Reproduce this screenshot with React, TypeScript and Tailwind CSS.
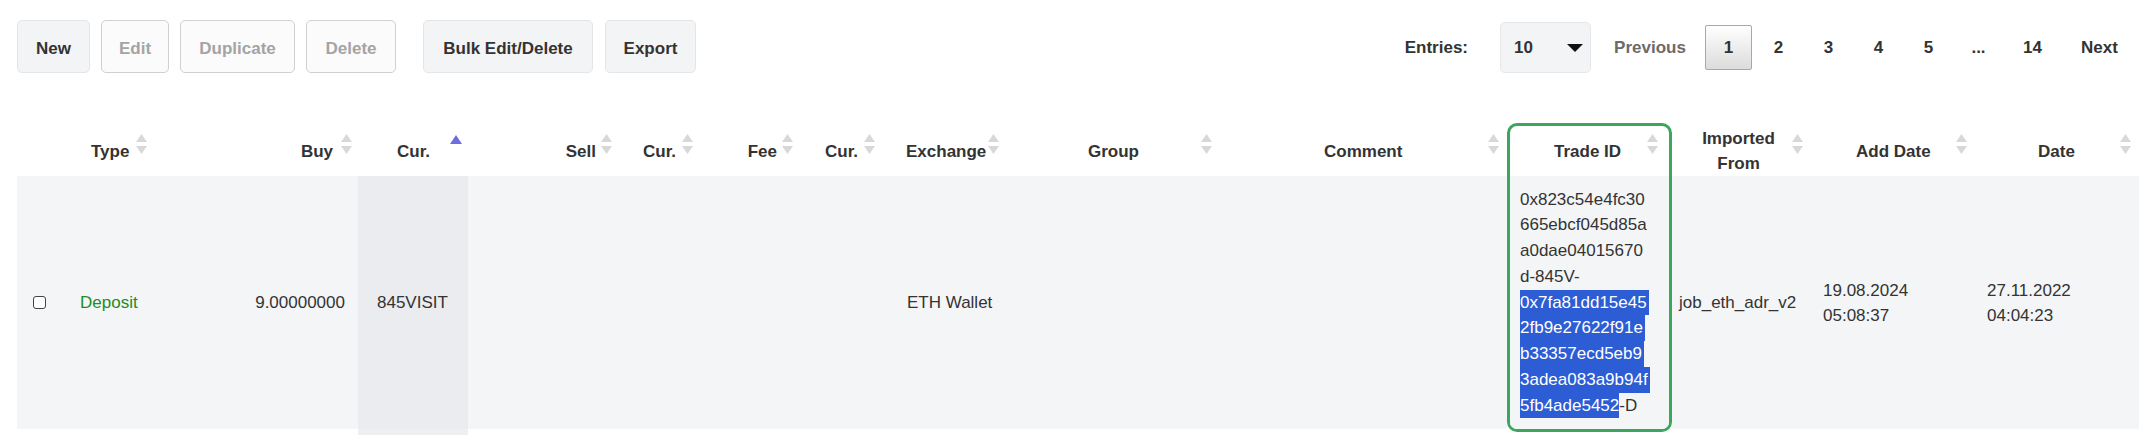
import React from "react";

function SortIcon() {
  return (
    <svg width="11" height="20" viewBox="0 0 11 20" className="text-[#d8d8d8]">
      <path d="M5.5 0 L11 8 L0 8 Z" fill="currentColor" />
      <path d="M0 12 L11 12 L5.5 20 Z" fill="currentColor" />
    </svg>
  );
}

function AscIcon() {
  return (
    <svg width="12" height="9" viewBox="0 0 12 9" className="text-[#6d6ddc]">
      <path d="M6 0 L12 9 L0 9 Z" fill="currentColor" />
    </svg>
  );
}

type Col = {
  key: string;
  width: string;
  head?: React.ReactNode;
  headClass: string;
  icon: "sort" | "asc" | null;
  iconClass: string;
  cell?: React.ReactNode;
  cellClass: string;
};

const ROW_BG = "bg-[#f4f5f7]";

const tradeLines = ["0x823c54e4fc30", "665ebcf045d85a", "a0dae04015670", "d-845V-"];
const selected = ["0x7fa81dd15e45", "2fb9e27622f91e", "b33357ecd5eb9", "3adea083a9b94f"];

const columns: Col[] = [
  {
    key: "check",
    width: "w-[48px]",
    headClass: "",
    icon: null,
    iconClass: "",
    cell: <span className="block w-[13px] h-[13px] rounded-[3px] border border-[#444] bg-white" />,
    cellClass: "pl-[16px]",
  },
  {
    key: "type",
    width: "w-[90px]",
    head: "Type",
    headClass: "pl-[26px]",
    icon: "sort",
    iconClass: "right-[8px]",
    cell: <span className="text-[#1f8b24]">Deposit</span>,
    cellClass: "pl-[15px]",
  },
  {
    key: "buy",
    width: "w-[203px]",
    head: "Buy",
    headClass: "justify-end pr-[25px]",
    icon: "sort",
    iconClass: "right-[6px]",
    cell: "9.00000000",
    cellClass: "justify-end pr-[13px]",
  },
  {
    key: "cur1",
    width: "w-[110px]",
    head: "Cur.",
    headClass: "pl-[39px]",
    icon: "asc",
    iconClass: "right-[6px] top-[9px]",
    cell: "845VISIT",
    cellClass: "pl-[19px]",
  },
  {
    key: "sell",
    width: "w-[148px]",
    head: "Sell",
    headClass: "justify-end pr-[20px]",
    icon: "sort",
    iconClass: "right-[4px]",
    cellClass: "",
  },
  {
    key: "cur2",
    width: "w-[81px]",
    head: "Cur.",
    headClass: "pl-[27px]",
    icon: "sort",
    iconClass: "right-[4px]",
    cellClass: "",
  },
  {
    key: "fee",
    width: "w-[100px]",
    head: "Fee",
    headClass: "justify-end pr-[20px]",
    icon: "sort",
    iconClass: "right-[4px]",
    cellClass: "",
  },
  {
    key: "cur3",
    width: "w-[82px]",
    head: "Cur.",
    headClass: "pl-[28px]",
    icon: "sort",
    iconClass: "right-[4px]",
    cellClass: "",
  },
  {
    key: "exchange",
    width: "w-[124px]",
    head: "Exchange",
    headClass: "pl-[27px]",
    icon: "sort",
    iconClass: "right-[4px]",
    cell: "ETH Wallet",
    cellClass: "pl-[28px]",
  },
  {
    key: "group",
    width: "w-[213px]",
    head: "Group",
    headClass: "pl-[85px]",
    icon: "sort",
    iconClass: "right-[4px]",
    cellClass: "",
  },
  {
    key: "comment",
    width: "w-[291px]",
    head: "Comment",
    headClass: "pl-[108px]",
    icon: "sort",
    iconClass: "right-[8px]",
    cellClass: "",
  },
  {
    key: "tradeid",
    width: "w-[159px]",
    head: "Trade ID",
    headClass: "pl-[44px]",
    icon: "sort",
    iconClass: "right-[11px]",
    cell: (
      <div className="leading-[25.75px]">
        {tradeLines.map((l) => (
          <div key={l}>{l}</div>
        ))}
        {selected.map((l) => (
          <div key={l}>
            <span className="inline-block bg-[#2c5dd5] text-white pr-[2px]">{l}</span>
          </div>
        ))}
        <div>
          <span className="inline-block bg-[#2c5dd5] text-white">5fb4ade5452</span>-D
        </div>
      </div>
    ),
    cellClass: "pl-[10px]",
  },
  {
    key: "imported",
    width: "w-[136px]",
    head: (
      <span className="block w-[73px] text-center">
        Imported
        <br />
        From
      </span>
    ),
    headClass: "pl-[30px]",
    icon: "sort",
    iconClass: "right-[5px]",
    cell: "job_eth_adr_v2",
    cellClass: "pl-[7px]",
  },
  {
    key: "adddate",
    width: "w-[164px]",
    head: "Add Date",
    headClass: "pl-[48px]",
    icon: "sort",
    iconClass: "right-[5px]",
    cell: (
      <div className="leading-[25px]">
        19.08.2024
        <br />
        05:08:37
      </div>
    ),
    cellClass: "pl-[15px]",
  },
  {
    key: "date",
    width: "w-[167px]",
    head: "Date",
    headClass: "pl-[66px]",
    icon: "sort",
    iconClass: "right-[8px]",
    cell: (
      <div className="leading-[25px]">
        27.11.2022
        <br />
        04:04:23
      </div>
    ),
    cellClass: "pl-[15px]",
  },
];

function HeadCell({ col }: { col: Col }) {
  return (
    <div className={`relative h-[50px] flex items-center font-bold leading-[25px] ${col.headClass}`}>
      {col.head}
      {col.icon && (
        <span className={`absolute top-[8px] ${col.iconClass}`}>
          {col.icon === "sort" ? <SortIcon /> : <AscIcon />}
        </span>
      )}
    </div>
  );
}

function Column({ col }: { col: Col }) {
  const sorted = col.key === "cur1";
  if (col.key === "tradeid") {
    return (
      <div className="-mt-[3px] w-[165px] shrink-0 border-[3px] border-[#3ca65e] rounded-[10px] overflow-hidden">
        <HeadCell col={col} />
        <div className={`h-[253px] flex items-center ${ROW_BG} ${col.cellClass}`}>{col.cell}</div>
      </div>
    );
  }
  return (
    <div className={`${col.width} shrink-0`}>
      <HeadCell col={col} />
      <div className={`h-[253px] flex items-center ${sorted ? "bg-[#ebecef]" : ROW_BG} ${col.cellClass}`}>
        {col.cell}
      </div>
      {sorted && <div className="h-[6px] bg-[#eeeff1]" />}
    </div>
  );
}

function ToolButton({ label, width, disabled, className }: { label: string; width: string; disabled?: boolean; className?: string }) {
  return (
    <button
      className={`${width} ${className ?? ""} h-[53px] pt-[5px] rounded-[5px] border font-bold flex items-center justify-center ${
        disabled ? "bg-[#fbfbfb] border-[#d0d0d0] text-[#a4a4a4]" : "bg-[#f3f4f6] border-[#e3e5e8] text-[#333]"
      }`}
    >
      {label}
    </button>
  );
}

export default function App() {
  return (
    <div className="w-[2156px] h-[436px] overflow-hidden bg-white text-[17px] text-[#333] font-['Liberation_Sans',Arial,sans-serif]">
      <div className="flex items-center justify-between pt-[20px] pl-[17px] pr-[20px]">
        <div className="flex items-center">
          <ToolButton label="New" width="w-[73px]" />
          <ToolButton label="Edit" width="w-[68px]" disabled className="ml-[11px]" />
          <ToolButton label="Duplicate" width="w-[115px]" disabled className="ml-[11px]" />
          <ToolButton label="Delete" width="w-[90px]" disabled className="ml-[11px]" />
          <ToolButton label="Bulk Edit/Delete" width="w-[170px]" className="ml-[27px]" />
          <ToolButton label="Export" width="w-[91px]" className="ml-[12px]" />
        </div>

        <div className="flex items-center pt-[2px]">
          <span className="font-bold">Entries:</span>
          <div className="ml-[32px] w-[91px] h-[51px] rounded-[5px] border border-[#e5e7eb] bg-[#f3f4f6] flex items-center justify-between pl-[13px] pr-[7px]">
            <span className="font-bold">10</span>
            <svg width="16" height="8" viewBox="0 0 16 8">
              <path d="M0 0 L16 0 L8 8 Z" fill="#111" />
            </svg>
          </div>
          <span className="ml-[5px] w-[108px] text-center font-bold text-[#6b6b6b]">Previous</span>
          <span className="ml-[1px] w-[47px] h-[45px] rounded-[2px] border border-[#a8a8a8] bg-linear-to-b from-white to-[#dcdcdc] flex items-center justify-center font-bold">
            1
          </span>
          {["2", "3", "4", "5", "..."].map((p) => (
            <span key={p} className="ml-[3px] w-[47px] text-center font-bold">
              {p}
            </span>
          ))}
          <span className="ml-[3px] w-[55px] text-center font-bold">14</span>
          <span className="ml-[3px] w-[73px] text-center font-bold">Next</span>
        </div>
      </div>

      <div className="mt-[53px] ml-[17px] flex items-start">
        {columns.map((c) => (
          <Column key={c.key} col={c} />
        ))}
      </div>
    </div>
  );
}
